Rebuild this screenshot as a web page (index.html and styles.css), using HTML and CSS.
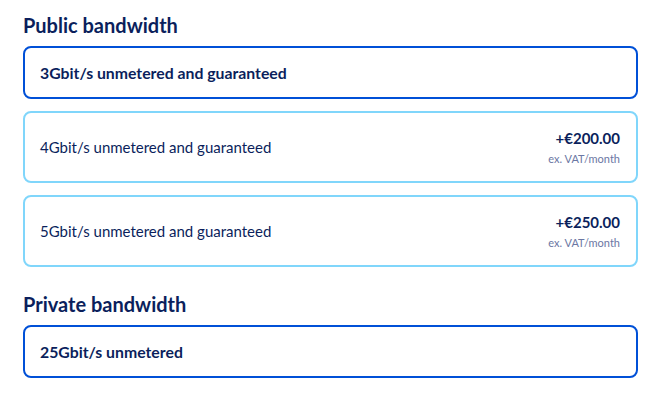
FILE: index.html
```html
<!DOCTYPE html>
<html>
<head>
    <meta charset="utf-8">
    <title>Bandwidth options</title>
    <link rel="stylesheet" href="styles.css">
</head>
<body>
    <div class="options">
        <section class="group">
            <h2>Public bandwidth</h2>
            <div class="tile selected">
                <span class="label">3Gbit/s unmetered and guaranteed</span>
            </div>
            <div class="tile">
                <span class="label">4Gbit/s unmetered and guaranteed</span>
                <div class="price">
                    <strong>+€200.00</strong>
                    <small>ex. VAT/month</small>
                </div>
            </div>
            <div class="tile">
                <span class="label">5Gbit/s unmetered and guaranteed</span>
                <div class="price">
                    <strong>+€250.00</strong>
                    <small>ex. VAT/month</small>
                </div>
            </div>
        </section>
        <section class="group">
            <h2>Private bandwidth</h2>
            <div class="tile selected">
                <span class="label">25Gbit/s unmetered</span>
            </div>
        </section>
    </div>
</body>
</html>
```

FILE: styles.css
```css
body {
    margin: 0;
    font-family: Lato, "Noto Sans", sans-serif;
    color: #0b1f5c;
    background: #fff;
}
.options {
    width: 615px;
    padding: 12px 0 0 23px;
    display: flex;
    flex-direction: column;
    gap: 24px;
}
.group { display: flex; flex-direction: column; gap: 12px; }
.group h2 {
    margin: 0 0 -4px;
    font-size: 20px;
    font-weight: bold;
    line-height: 26px;
    color: #0b1f5c;
}
.tile {
    display: flex;
    align-items: center;
    justify-content: space-between;
    border: 2px solid #80d6fb;
    border-radius: 8px;
    padding: 0 16px 0 15px;
    min-height: 68px;
}
.tile.selected {
    border-color: #0050d7;
    min-height: 49px;
}
.label { font-size: 15px; }
.selected .label { font-weight: bold; font-size: 15.8px; }
.price {
    display: flex;
    flex-direction: column;
    align-items: flex-end;
    gap: 5px;
}
.price strong { font-size: 15px; }
.price small { font-size: 11px; color: #6b77a3; }
```
